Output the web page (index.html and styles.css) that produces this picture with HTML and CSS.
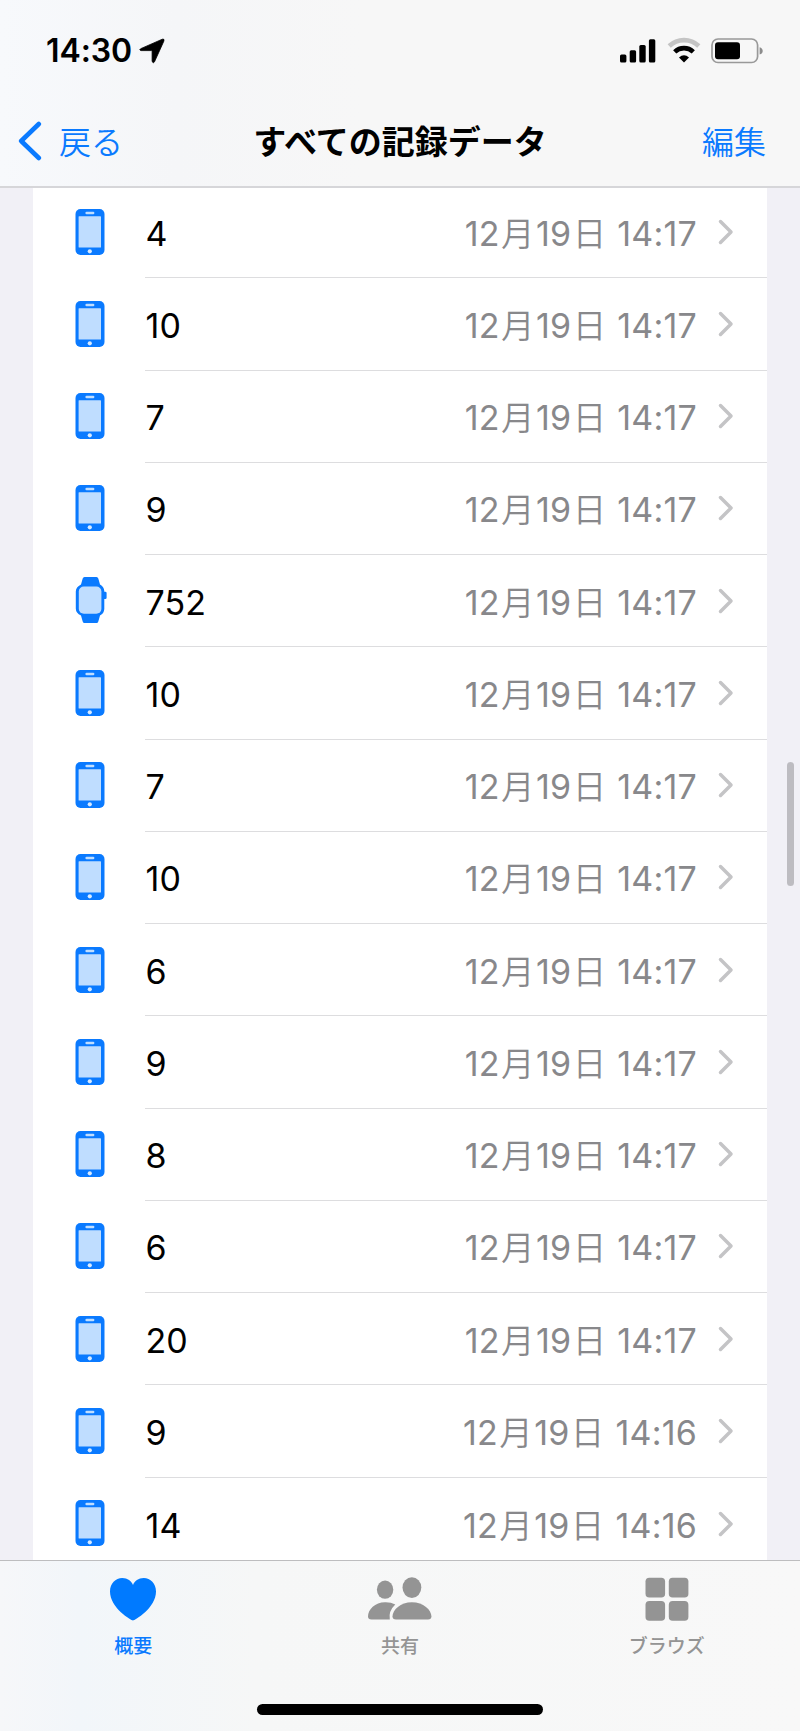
FILE: index.html
```
<!DOCTYPE html>
<html lang="ja">
<head>
<meta charset="utf-8">
<title>すべての記録データ</title>
<link rel="stylesheet" href="styles.css">
</head>
<body>
<svg class="defs" aria-hidden="true">
  <symbol id="phone" viewBox="0 0 30 46">
    <rect x="0.5" y="0" width="29" height="46" rx="5" fill="#0a7aff"/>
    <rect x="3.6" y="7.2" width="22.4" height="31.4" rx="0.6" fill="#bfddff"/>
    <rect x="10.4" y="2.8" width="9" height="2.4" rx="1.2" fill="#bfddff"/>
    <circle cx="14.8" cy="42.3" r="2.1" fill="#d8eaff"/>
  </symbol>
  <symbol id="watch" viewBox="0 0 32 48">
    <path d="M9.5 1h12q1.4 0 1.8 1.5l1.7 6q4 2.3 4.300 6.5v.8h1q1.300 0 1.300 1.300v4.600q0 1.300-1.300 1.300h-1V33q-.3 4.500-4.300 6.500l-1.700 6q-.4 1.500-1.800 1.500h-12q-1.400 0-1.800-1.500L6 39.500Q.8 37 .8 32.500v-17Q.8 11 6 8.500l1.700-6Q8.100 1 9.500 1z" fill="#0a7aff"/>
    <rect x="3.800" y="10.500" width="22.600" height="27.200" rx="5" fill="#bfddff"/>
  </symbol>
  <symbol id="chev" viewBox="0 0 16 26">
    <path d="M2.500 2.500L13 13 2.500 23.500" fill="none" stroke="#c4c4c6" stroke-width="3.500" stroke-linecap="round" stroke-linejoin="round"/>
  </symbol>
</svg>
<div class="screen">
  <header class="top">
    <div class="status">
      <span class="time">14:30</span>
      <svg class="loc" viewBox="0 0 26 26"><path d="M23.300 1.200Q25.600.500 24.900 3L15.500 23.800q-1.100 2-2.400-.3V13.200q0-.6-.6-.6H2Q-.3 11.800 1.700 10.700z" fill="#000" stroke="#000" stroke-width=".8" stroke-linejoin="round"/></svg>
      <span class="grow"></span>
      <svg class="signal" viewBox="0 0 36 24"><rect x="0" y="15.500" width="6.400" height="8" rx="1.500"/><rect x="9.700" y="11.300" width="6.400" height="12.200" rx="1.500"/><rect x="19.300" y="6" width="6.400" height="17.500" rx="1.500"/><rect x="28.900" y="0.300" width="6.400" height="23.200" rx="1.500"/></svg>
      <svg class="wifi" viewBox="0 0 34 26" fill="none"><path d="M2.200 9A21.500 21.500 0 0 1 31.800 9" stroke="#c4c4c4" stroke-width="4.600"/><path d="M7.700 14.800A13.500 13.500 0 0 1 26.300 14.800" stroke="#000" stroke-width="4.600"/><path d="M17 25.500L12 20.400Q17 16.200 22 20.400z" fill="#000"/></svg>
      <svg class="battery" viewBox="0 0 52 26"><rect x="1" y="1" width="45.600" height="23.500" rx="6" fill="none" stroke="#999" stroke-width="1.700"/><rect x="4" y="4.200" width="25" height="17" rx="3" fill="#000"/><path d="M48.600 9.200q3.100 1 3.100 3.700t-3.100 3.700z" fill="#8c8c8c"/></svg>
    </div>
    <nav class="nav">
      <div class="back"><svg class="backicon" viewBox="0 0 24 40"><path d="M20.800 3L3.200 20l17.600 17" fill="none" stroke="#0a7aff" stroke-width="4.600" stroke-linecap="round" stroke-linejoin="round"/></svg><span>戻る</span></div>
      <h1 class="title">すべての記録データ</h1>
      <div class="edit">編集</div>
    </nav>
  </header>
  <main class="body">
    <div class="list">
      <div class="row"><svg class="dev"><use href="#phone"/></svg><div class="cell"><span class="val">4</span><span class="date">12<i>月</i>19<i>日</i> 14:17</span><svg class="chev"><use href="#chev"/></svg></div></div>
      <div class="row"><svg class="dev"><use href="#phone"/></svg><div class="cell"><span class="val">10</span><span class="date">12<i>月</i>19<i>日</i> 14:17</span><svg class="chev"><use href="#chev"/></svg></div></div>
      <div class="row"><svg class="dev"><use href="#phone"/></svg><div class="cell"><span class="val">7</span><span class="date">12<i>月</i>19<i>日</i> 14:17</span><svg class="chev"><use href="#chev"/></svg></div></div>
      <div class="row"><svg class="dev"><use href="#phone"/></svg><div class="cell"><span class="val">9</span><span class="date">12<i>月</i>19<i>日</i> 14:17</span><svg class="chev"><use href="#chev"/></svg></div></div>
      <div class="row"><svg class="dev watch"><use href="#watch"/></svg><div class="cell"><span class="val">752</span><span class="date">12<i>月</i>19<i>日</i> 14:17</span><svg class="chev"><use href="#chev"/></svg></div></div>
      <div class="row"><svg class="dev"><use href="#phone"/></svg><div class="cell"><span class="val">10</span><span class="date">12<i>月</i>19<i>日</i> 14:17</span><svg class="chev"><use href="#chev"/></svg></div></div>
      <div class="row"><svg class="dev"><use href="#phone"/></svg><div class="cell"><span class="val">7</span><span class="date">12<i>月</i>19<i>日</i> 14:17</span><svg class="chev"><use href="#chev"/></svg></div></div>
      <div class="row"><svg class="dev"><use href="#phone"/></svg><div class="cell"><span class="val">10</span><span class="date">12<i>月</i>19<i>日</i> 14:17</span><svg class="chev"><use href="#chev"/></svg></div></div>
      <div class="row"><svg class="dev"><use href="#phone"/></svg><div class="cell"><span class="val">6</span><span class="date">12<i>月</i>19<i>日</i> 14:17</span><svg class="chev"><use href="#chev"/></svg></div></div>
      <div class="row"><svg class="dev"><use href="#phone"/></svg><div class="cell"><span class="val">9</span><span class="date">12<i>月</i>19<i>日</i> 14:17</span><svg class="chev"><use href="#chev"/></svg></div></div>
      <div class="row"><svg class="dev"><use href="#phone"/></svg><div class="cell"><span class="val">8</span><span class="date">12<i>月</i>19<i>日</i> 14:17</span><svg class="chev"><use href="#chev"/></svg></div></div>
      <div class="row"><svg class="dev"><use href="#phone"/></svg><div class="cell"><span class="val">6</span><span class="date">12<i>月</i>19<i>日</i> 14:17</span><svg class="chev"><use href="#chev"/></svg></div></div>
      <div class="row"><svg class="dev"><use href="#phone"/></svg><div class="cell"><span class="val">20</span><span class="date">12<i>月</i>19<i>日</i> 14:17</span><svg class="chev"><use href="#chev"/></svg></div></div>
      <div class="row"><svg class="dev"><use href="#phone"/></svg><div class="cell"><span class="val">9</span><span class="date">12<i>月</i>19<i>日</i> 14:16</span><svg class="chev"><use href="#chev"/></svg></div></div>
      <div class="row"><svg class="dev"><use href="#phone"/></svg><div class="cell"><span class="val">14</span><span class="date">12<i>月</i>19<i>日</i> 14:16</span><svg class="chev"><use href="#chev"/></svg></div></div>
    </div>
    <div class="scrollbar"></div>
  </main>
  <footer class="bottom">
    <div class="tabs">
      <div class="tab active"><svg class="ticon heart" viewBox="0 0 48 46"><path d="M24 44.500C22.500 44.500 1 32 1 15.500 1 7.500 6.500 2 13.300 2 18.500 2 22.500 5 24 9 25.500 5 29.500 2 34.700 2 41.500 2 47 7.500 47 15.500 47 32 25.500 44.500 24 44.500z" fill="#007aff"/></svg><span>概要</span></div>
      <div class="tab"><svg class="ticon people" viewBox="0 0 64 46" fill="#949494"><ellipse cx="17.100" cy="13.700" rx="8.200" ry="9.100"/><ellipse cx="43.900" cy="11.600" rx="9.400" ry="10.400"/><path d="M27.300 28.500Q22.800 26 17 26.200C7 26.200 0 33.500 0 40.500Q0 43.500 3.500 43.500H21.800Q20.300 35 27.300 28.500z"/><path d="M43.900 26.200C32.500 26.200 24.500 34 24.500 40.300Q24.500 43.500 28 43.500H60Q63.400 43.500 63.400 40.300C63.400 34 55.300 26.200 43.900 26.200z"/></svg><span>共有</span></div>
      <div class="tab"><svg class="ticon grid" viewBox="0 0 44 46" fill="#949494"><rect x="0.500" y="1.800" width="19.600" height="19.700" rx="3.800"/><rect x="23.800" y="1.800" width="19.600" height="19.700" rx="3.800"/><rect x="0.500" y="25" width="19.600" height="19.700" rx="3.800"/><rect x="23.800" y="25" width="19.600" height="19.700" rx="3.800"/></svg><span>ブラウズ</span></div>
    </div>
    <div class="home"></div>
  </footer>
</div>
</body>
</html>
```
FILE: styles.css
```
* { box-sizing: border-box; }
body { margin: 0; font-family: Inter, "Noto Sans CJK JP", sans-serif; }
.defs { position: absolute; width: 0; height: 0; }
.screen { width: 800px; height: 1731px; display: flex; flex-direction: column; overflow: hidden; background: #f1f0f6; }
.top { height: 188px; flex: none; background: linear-gradient(90deg, #f7f9fc, #f5f6f8 22%, #f7f7f7 45%); border-bottom: 2px solid #d6d6d9; }
.status { height: 99px; display: flex; align-items: flex-start; padding: 0 37px 0 46px; }
.time { font-size: 32px; font-weight: 600; line-height: 40px; margin-top: 31px; width: 93px; letter-spacing: -0.100px; white-space: nowrap; }
.loc { width: 26px; height: 26px; margin-top: 38px; }
.grow { flex: 1; }
.signal { width: 36px; height: 24px; margin-top: 38.500px; }
.wifi { width: 34px; height: 26px; margin: 37px 10.500px 0 10.500px; }
.battery { width: 52px; height: 26px; margin-top: 38px; }
.nav { height: 86px; display: grid; grid-template-columns: 200px 1fr 200px; align-items: center; font-family: "Noto Sans CJK JP", sans-serif; padding-bottom: 5px; }
.back, .edit { color: #0a7aff; font-size: 32px; font-weight: 350; line-height: 50px; }
.back { display: flex; align-items: center; padding-left: 18px; gap: 17px; }
.backicon { width: 24px; height: 40px; margin-top: 3px; }
.edit { text-align: right; padding-right: 34px; }
.title { margin: 0; text-align: center; font-size: 33px; font-weight: 700; line-height: 50px; white-space: nowrap; }
.body { height: 1372px; flex: none; position: relative; overflow: hidden; padding: 0 33px; }
.list { background: #fff; margin-top: -2px; }
.row { height: 92.260px; display: flex; }
.dev { width: 30px; height: 46px; margin: 22.500px 0 0 42.200px; flex: none; }
.dev.watch { width: 32px; height: 48px; margin: 21px -1.500px 0 41.700px; }
.cell { flex: 1; margin-left: 40.300px; height: 92.260px; display: flex; align-items: center; border-bottom: 1.500px solid #dddddf; }
.row:last-child .cell { border-bottom: 0; }
.val, .date { font-size: 34px; line-height: 44px; padding-top: 4px; white-space: nowrap; letter-spacing: 0.100px; }
.date { margin-left: auto; color: #88888b; letter-spacing: 0.200px; }
.date i { font: 350 33.500px/30px "Noto Sans CJK JP", sans-serif; letter-spacing: 0; margin: 0 1.400px; }
.chev { width: 16px; height: 26px; margin: 0 33px 0 21px; }
.scrollbar { position: absolute; left: 787px; top: 574px; width: 7px; height: 124px; border-radius: 3.500px; background: #bdbcc1; }
.bottom { flex: 1; background: linear-gradient(90deg, #f6f7f9, #f2f6fa 10%, #f6f7f7 32%, #f8f8f8); border-top: 1px solid #bdbdbf; display: flex; flex-direction: column; align-items: center; }
.tabs { width: 800px; height: 143px; display: grid; grid-template-columns: 1fr 1fr 1fr; }
.tab { display: flex; flex-direction: column; align-items: center; padding-top: 15px; color: #949494; font: 500 19px/28px "Noto Sans CJK JP", sans-serif; gap: 9px; }
.tab.active { color: #0a7aff; }
.ticon { height: 46px; }
.heart { width: 48px; }
.people { width: 64px; }
.grid { width: 44px; }
.home { width: 286px; height: 10.500px; border-radius: 5.500px; background: #000; }
```
